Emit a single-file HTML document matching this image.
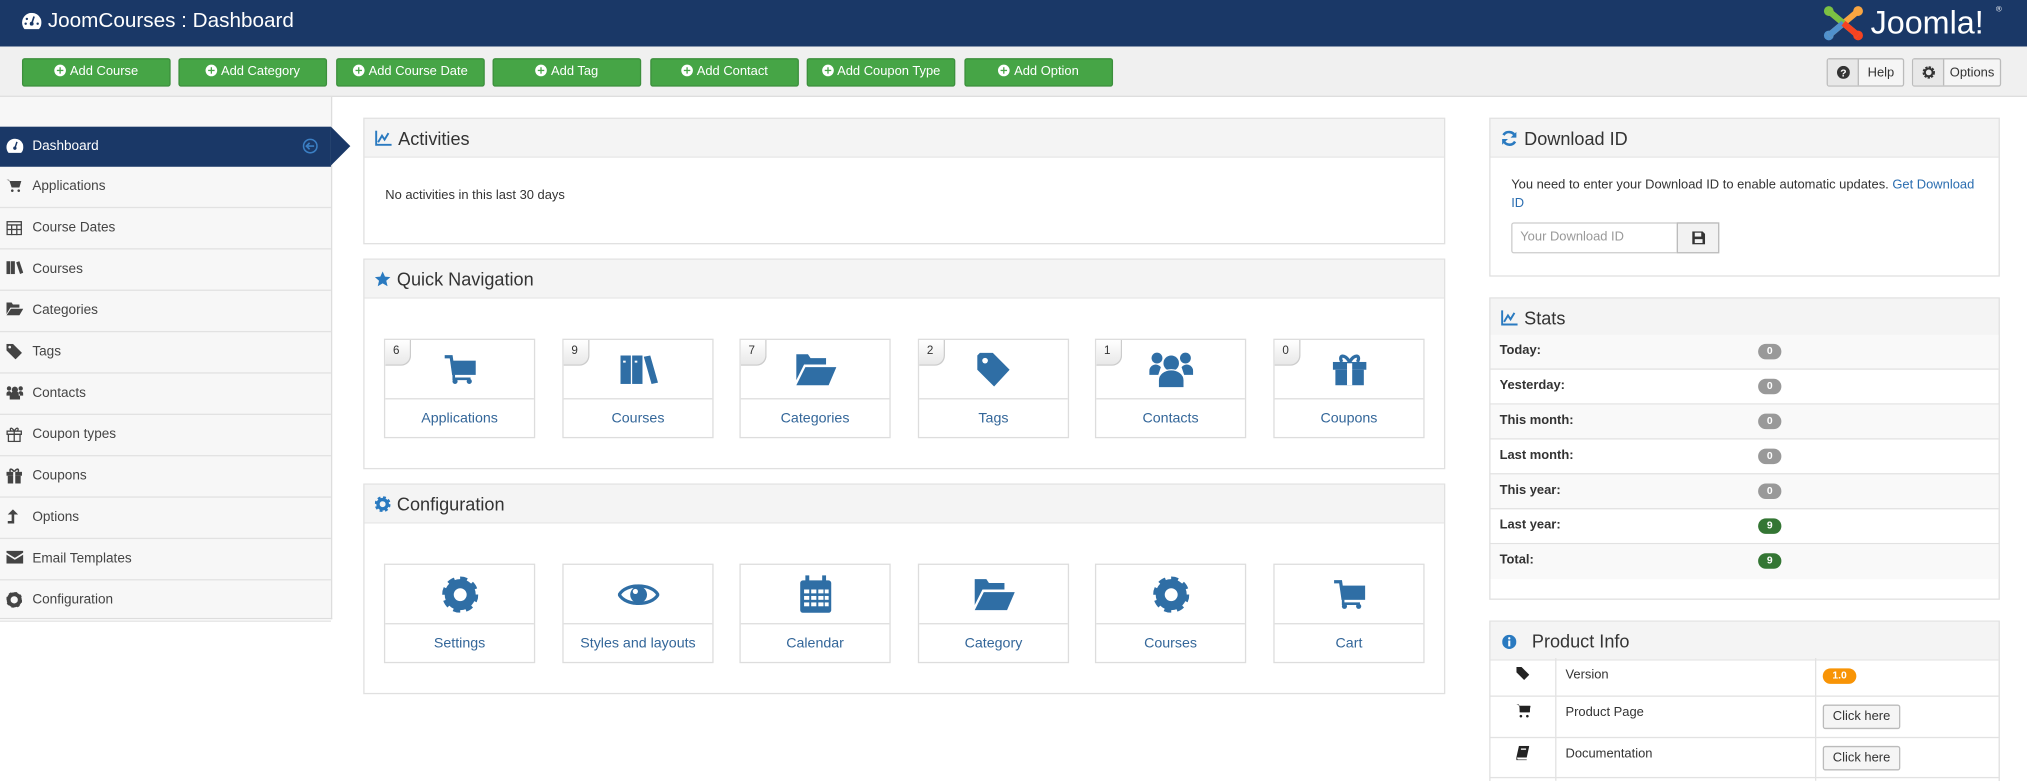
<!DOCTYPE html>
<html><head><meta charset="utf-8"><style>
*{box-sizing:border-box;margin:0;padding:0}
html,body{width:2027px;height:781px;overflow:hidden;background:#fff;font-family:"Liberation Sans",Arial,sans-serif;color:#333}
#w{width:1568px;height:604px;transform:scale(1.29273);transform-origin:0 0;position:relative}
.a{position:absolute}
.hdr{left:0;top:0;width:1568px;height:36px;background:#1a3867;color:#fff}
.tb{left:0;top:36px;width:1568px;height:39px;background:#f0f0f0;border-bottom:1px solid #ddd}
.gb{top:45px;height:22px;width:115px;background:#46a546;border:1px solid #3c8f3c;border-radius:2px;color:#fff;font-size:10px;text-align:center;line-height:20px}
.gb i{display:inline-block;width:9px;height:9px;border-radius:50%;background:#fff;vertical-align:-1px;margin-right:3px;position:relative}
.gb i:before{content:"";position:absolute;left:2px;top:4px;width:5px;height:1px;background:#46a546}
.gb i:after{content:"";position:absolute;left:4px;top:2px;width:1px;height:5px;background:#46a546}
.wb{top:45px;height:22px;border:1px solid #bbb;border-radius:2px;background:#f5f5f5;font-size:10px;display:flex}
.wb span{display:flex;align-items:center;justify-content:center}
.side{left:0;top:75px;width:257px;height:404px;background:#f7f7f7;border-right:1px solid #ddd;border-bottom:1px solid #ddd}
.si{left:0;width:256px;height:32px;border-bottom:1px solid #e2e2e2;font-size:10.5px;color:#444;line-height:31px;padding-left:25px}
.si svg{position:absolute;left:5px;top:9px}
.pn{border:1px solid #e0e0e0;background:#fff}
.ph{height:30px;background:#f4f4f4;border-bottom:1px solid #e8e8e8;font-size:14px;color:#333;line-height:30px;padding-left:8px}
.ph svg{vertical-align:-1px;margin-right:5px}
.tile{width:117px;height:77px;border:1px solid #ddd;background:#fff}
.tile .ic{height:46px;border-bottom:1px solid #ddd;display:flex;align-items:center;justify-content:center}
.tile .lb{height:30px;text-align:center;line-height:30px;font-size:11px;color:#336699}
.cnt{position:absolute;left:0;top:0;width:20px;height:20px;background:linear-gradient(#fff,#e8e8e8);border-right:1px solid #ccc;border-bottom:1px solid #ccc;border-bottom-right-radius:8px;font-size:9px;padding:3px 0 0 6px;color:#333}
.sr{left:1153px;width:393px;height:27px;border-bottom:1px solid #e2e2e2;font-size:10px;font-weight:bold;padding-left:7px;line-height:26px}
.bd{position:absolute;left:207px;top:7px;width:18px;height:12px;border-radius:6px;background:#999;color:#fff;font-size:8px;line-height:12px;text-align:center}
.pr{left:1153px;width:393px;border-bottom:1px solid #e2e2e2;font-size:10px}
.ck{position:absolute;left:257px;width:60px;height:19px;border:1px solid #bbb;border-radius:2px;background:#f5f5f5;font-size:10px;text-align:center;line-height:17px}
</style></head><body><div id="w">
<div class="a hdr">
 <svg class="a" style="left:17px;top:10px" width="15" height="13" viewBox="0 0 16 14"><path d="M8 0A8 8 0 0 0 0 8c0 2 .7 4 2 5.5h12A8 8 0 0 0 8 0z" fill="#fff"/><circle cx="8" cy="9" r="1.6" fill="#1a3867"/><path d="M8 9L10 3" stroke="#1a3867" stroke-width="1.4"/><circle cx="4" cy="5" r="1" fill="#1a3867"/><circle cx="3" cy="9" r="1" fill="#1a3867"/><circle cx="13" cy="9" r="1" fill="#1a3867"/></svg>
 <div class="a" style="left:37px;top:8px;font-size:16px">JoomCourses : Dashboard</div>
 <svg class="a" style="left:1409px;top:3px" width="34" height="30" viewBox="0 0 36 30"><circle cx="6" cy="5" r="4" fill="#7ac143"/><circle cx="30" cy="5" r="4" fill="#f9a541"/><circle cx="6" cy="25" r="4" fill="#5091cd"/><circle cx="30" cy="25" r="4" fill="#f44321"/><path d="M6 5L30 25M30 5L6 25" stroke="#f9a541" stroke-width="5"/><path d="M6 5L18 15" stroke="#7ac143" stroke-width="5"/><path d="M6 25L18 15" stroke="#5091cd" stroke-width="5"/><path d="M30 25L18 15" stroke="#f44321" stroke-width="5"/></svg>
 <div class="a" style="left:1447px;top:4px;font-size:25px;color:#fff">Joomla!</div>
 <div class="a" style="left:1544px;top:5px;font-size:6px">®</div>
</div>
<div class="a tb"></div>
<div class="a gb" style="left:17px"><i></i>Add Course</div>
<div class="a gb" style="left:138px"><i></i>Add Category</div>
<div class="a gb" style="left:260px"><i></i>Add Course Date</div>
<div class="a gb" style="left:381px"><i></i>Add Tag</div>
<div class="a gb" style="left:503px"><i></i>Add Contact</div>
<div class="a gb" style="left:624px"><i></i>Add Coupon Type</div>
<div class="a gb" style="left:746px"><i></i>Add Option</div>
<div class="a wb" style="left:1413px;width:60px"><span style="width:24px;border-right:1px solid #bbb;background:#e8e8e8"><svg width="10" height="10" viewBox="0 0 10 10"><circle cx="5" cy="5" r="5" fill="#333"/><text x="5" y="8.3" font-size="8" fill="#fff" text-anchor="middle" font-weight="bold" font-family="Liberation Sans">?</text></svg></span><span style="flex:1">Help</span></div>
<div class="a wb" style="left:1479px;width:69px"><span style="width:24px;border-right:1px solid #bbb;background:#e8e8e8"><svg width="10" height="10" viewBox="0 0 10 10"><circle cx="5" cy="5" r="3.6" fill="none" stroke="#333" stroke-width="2.4" stroke-dasharray="1.6 0.8"/><circle cx="5" cy="5" r="3" fill="none" stroke="#333" stroke-width="1.5"/></svg></span><span style="flex:1">Options</span></div>

<div class="a side"></div>
<div class="a" style="left:0;top:98px;width:256px;height:31px;background:#1a3867"></div>
<div class="a" style="left:256px;top:98px;width:0;height:0;border-top:15.5px solid transparent;border-bottom:15.5px solid transparent;border-left:15px solid #1a3867"></div>
<div class="a" style="left:25px;top:98px;line-height:31px;font-size:10.5px;color:#fff">Dashboard</div>
<svg class="a" style="left:5px;top:107px" width="13" height="12" viewBox="0 0 16 14"><path d="M8 0A8 8 0 0 0 0 8c0 2 .7 4 2 5.5h12A8 8 0 0 0 8 0z" fill="#fff"/><circle cx="8" cy="9" r="1.6" fill="#1a3867"/><path d="M8 9L10 3" stroke="#1a3867" stroke-width="1.4"/></svg>
<svg class="a" style="left:234px;top:107px" width="12" height="12" viewBox="0 0 12 12"><circle cx="6" cy="6" r="5.2" fill="none" stroke="#3b7fc4" stroke-width="1.2"/><path d="M9 6H3.5M5.5 3.5L3 6l2.5 2.5" stroke="#3b7fc4" stroke-width="1.3" fill="none"/></svg>
<div class="a si" style="top:129px">Applications<svg width="12" height="11" viewBox="0 0 12 11"><path d="M0 1h2l2 6h6l1.5-5H3" fill="#444"/><circle cx="4.5" cy="9.5" r="1" fill="#444"/><circle cx="9.5" cy="9.5" r="1" fill="#444"/></svg></div>
<div class="a si" style="top:161px">Course Dates<svg width="12" height="12" viewBox="0 0 12 12"><rect x="0.5" y="1.5" width="11" height="10" fill="none" stroke="#444"/><path d="M0 4h12M4 4v8M8 4v8M0 7.5h12" stroke="#444"/></svg></div>
<div class="a si" style="top:193px">Courses<svg width="13" height="11" viewBox="0 0 13 11"><rect x="0" y="0" width="3" height="10" fill="#444"/><rect x="3.5" y="0" width="3" height="10" fill="#444"/><path d="M7.5 1l2.5-1 3 9-2.5 1z" fill="#444"/></svg></div>
<div class="a si" style="top:225px">Categories<svg width="13" height="10" viewBox="0 0 13 10"><path d="M0 0h4l1 1.5h5V4H3L0 9z" fill="#444"/><path d="M3.5 4.8H13L10 10H0z" fill="#444"/></svg></div>
<div class="a si" style="top:257px">Tags<svg width="12" height="12" viewBox="0 0 12 12"><path d="M0 0h5l7 7-5 5-7-7z" fill="#444"/><circle cx="2.5" cy="2.5" r="1" fill="#f7f7f7"/></svg></div>
<div class="a si" style="top:289px">Contacts<svg width="13" height="11" viewBox="0 0 13 11"><circle cx="6.5" cy="3.5" r="2.4" fill="#444"/><circle cx="2" cy="2.5" r="1.7" fill="#444"/><circle cx="11" cy="2.5" r="1.7" fill="#444"/><path d="M2.5 11V8.5a4 4 0 0 1 8 0V11zM0 8V6.5a2 2 0 0 1 3.5-1.2V8zM13 8V6.5a2 2 0 0 0-3.5-1.2V8z" fill="#444"/></svg></div>
<div class="a si" style="top:321px">Coupon types<svg width="12" height="12" viewBox="0 0 12 12"><rect x="0.5" y="3.5" width="11" height="2.5" fill="none" stroke="#444"/><rect x="1.5" y="6" width="9" height="5.5" fill="none" stroke="#444"/><path d="M6 3.5v8M6 3.5C4 0 2 1 3.5 3.5M6 3.5C8 0 10 1 8.5 3.5" fill="none" stroke="#444"/></svg></div>
<div class="a si" style="top:353px">Coupons<svg width="12" height="12" viewBox="0 0 12 12"><rect x="0" y="3" width="12" height="3" fill="#444"/><rect x="1" y="6" width="10" height="6" fill="#444"/><path d="M6 3C4 0 2 0.5 3 3M6 3c2-3 4-2.5 3 0" fill="none" stroke="#444" stroke-width="1.2"/><rect x="5.2" y="3" width="1.6" height="9" fill="#f7f7f7"/></svg></div>
<div class="a si" style="top:385px">Options<svg width="10" height="12" viewBox="0 0 10 12"><path d="M5 0L1 4h3v5H1v2h5V4h3z" fill="#444"/></svg></div>
<div class="a si" style="top:417px">Email Templates<svg width="13" height="10" viewBox="0 0 13 10"><path d="M0 0h13v1.5L6.5 5.5 0 1.5z M0 3l6.5 4L13 3v7H0z" fill="#444"/></svg></div>
<div class="a si" style="top:449px">Configuration<svg width="12" height="12" viewBox="0 0 12 12"><circle cx="6" cy="6" r="4.3" fill="none" stroke="#444" stroke-width="3"/><circle cx="6" cy="6" r="5.3" fill="none" stroke="#444" stroke-width="2" stroke-dasharray="2 2.15"/></svg></div>

<div class="a pn" style="left:281px;top:91px;width:837px;height:98px">
 <div class="ph"><svg width="13" height="12" viewBox="0 0 13 12"><path d="M1 0v11h12" stroke="#2a7ac0" stroke-width="1.5" fill="none"/><path d="M2.5 9l3-5 2 3 3-5" stroke="#2a7ac0" stroke-width="1.5" fill="none"/></svg>Activities</div>
 <div style="font-size:10px;padding:24px 0 0 16px">No activities in this last 30 days</div>
</div>

<div class="a pn" style="left:281px;top:200px;width:837px;height:163px">
 <div class="ph"><svg width="12" height="12" viewBox="0 0 12 12"><path d="M6 0l1.8 4 4.2.4-3.2 2.8 1 4.2L6 9.2 2.2 11.4l1-4.2L0 4.4 4.2 4z" fill="#2a7ac0"/></svg>Quick Navigation</div>
</div>
<div class="a tile" style="left:297px;top:262px"><div class="cnt">6</div><div class="ic"><svg width="26" height="26" viewBox="0 0 26 26"><rect x="7" y="6" width="18" height="11" fill="#2f6ea5"/><circle cx="9" cy="22" r="2" fill="#2f6ea5"/><circle cx="20" cy="22" r="2" fill="#2f6ea5"/><path d="M8 17v3h13" stroke="#2f6ea5" stroke-width="2" fill="none"/><path d="M1 3h5l2 14" stroke="#2f6ea5" stroke-width="2.5" fill="none"/></svg></div><div class="lb">Applications</div></div>
<div class="a tile" style="left:435px;top:262px"><div class="cnt">9</div><div class="ic"><svg width="30" height="26" viewBox="0 0 30 26"><rect x="1" y="2" width="8" height="22" fill="#2f6ea5"/><rect x="10" y="2" width="8" height="22" fill="#2f6ea5"/><path d="M19 3l5-1 6 21-5 1z" fill="#2f6ea5"/><rect x="3" y="6" width="2" height="1.5" fill="#fff"/><rect x="12" y="6" width="2" height="1.5" fill="#fff"/></svg></div><div class="lb">Courses</div></div>
<div class="a tile" style="left:572px;top:262px"><div class="cnt">7</div><div class="ic"><svg width="32" height="26" viewBox="0 0 32 26"><path d="M1 1h9l2 3h12v5H7L1 21z" fill="#2f6ea5"/><path d="M8 11h24l-6 14H1z" fill="#2f6ea5"/></svg></div><div class="lb">Categories</div></div>
<div class="a tile" style="left:710px;top:262px"><div class="cnt">2</div><div class="ic"><svg width="28" height="28" viewBox="0 0 28 28"><path d="M3 1h10l13 13-12 13L1 14V3z" fill="#2f6ea5"/><circle cx="7" cy="7" r="2.2" fill="#fff"/></svg></div><div class="lb">Tags</div></div>
<div class="a tile" style="left:847px;top:262px"><div class="cnt">1</div><div class="ic"><svg width="34" height="30" viewBox="0 0 34 30"><circle cx="17" cy="10" r="6" fill="#2f6ea5"/><circle cx="6" cy="6" r="4.2" fill="#2f6ea5"/><circle cx="28" cy="6" r="4.2" fill="#2f6ea5"/><path d="M7 29v-6a10 8 0 0 1 20 0v6z" fill="#2f6ea5" stroke="#fff" stroke-width="1"/><path d="M0 19v-3a5 5 0 0 1 9-3l-2 6zM34 19v-3a5 5 0 0 0-9-3l2 6z" fill="#2f6ea5"/></svg></div><div class="lb">Contacts</div></div>
<div class="a tile" style="left:985px;top:262px"><div class="cnt">0</div><div class="ic"><svg width="26" height="26" viewBox="0 0 26 26"><rect x="0" y="7" width="26" height="6" fill="#2f6ea5"/><rect x="2" y="13" width="22" height="12" fill="#2f6ea5"/><path d="M13 7C9 0 4 2 7 7M13 7c4-7 9-5 6 0" fill="none" stroke="#2f6ea5" stroke-width="2.5"/><rect x="11" y="8" width="4" height="17" fill="#fff"/></svg></div><div class="lb">Coupons</div></div>

<div class="a pn" style="left:281px;top:374px;width:837px;height:163px">
 <div class="ph"><svg width="12" height="12" viewBox="0 0 12 12"><circle cx="6" cy="6" r="3.6" fill="none" stroke="#2a7ac0" stroke-width="2.6"/><circle cx="6" cy="6" r="5.2" fill="none" stroke="#2a7ac0" stroke-width="2" stroke-dasharray="2.2 1.9"/></svg>Configuration</div>
</div>
<div class="a tile" style="left:297px;top:436px"><div class="ic"><svg width="28" height="28" viewBox="0 0 28 28"><circle cx="14" cy="14" r="8.5" fill="none" stroke="#2f6ea5" stroke-width="7"/><circle cx="14" cy="14" r="12" fill="none" stroke="#2f6ea5" stroke-width="4" stroke-dasharray="5.2 4.2"/></svg></div><div class="lb">Settings</div></div>
<div class="a tile" style="left:435px;top:436px"><div class="ic"><svg width="32" height="22" viewBox="0 0 32 22"><path d="M1 11C6 2 26 2 31 11 26 20 6 20 1 11z" fill="none" stroke="#2f6ea5" stroke-width="2.5"/><circle cx="16" cy="11" r="6.5" fill="#2f6ea5"/><circle cx="13.5" cy="8.5" r="2" fill="#fff"/></svg></div><div class="lb">Styles and layouts</div></div>
<div class="a tile" style="left:572px;top:436px"><div class="ic"><svg width="26" height="30" viewBox="0 0 26 30"><rect x="1" y="4" width="24" height="25" rx="2" fill="#2f6ea5"/><rect x="5" y="0" width="3" height="6" fill="#2f6ea5"/><rect x="18" y="0" width="3" height="6" fill="#2f6ea5"/><g fill="#fff"><rect x="4" y="11" width="4" height="3"/><rect x="9.5" y="11" width="4" height="3"/><rect x="15" y="11" width="4" height="3"/><rect x="4" y="16" width="4" height="3"/><rect x="9.5" y="16" width="4" height="3"/><rect x="15" y="16" width="4" height="3"/><rect x="4" y="21" width="4" height="3"/><rect x="9.5" y="21" width="4" height="3"/><rect x="15" y="21" width="4" height="3"/><rect x="20" y="11" width="3" height="3"/><rect x="20" y="16" width="3" height="3"/><rect x="20" y="21" width="3" height="3"/></g></svg></div><div class="lb">Calendar</div></div>
<div class="a tile" style="left:710px;top:436px"><div class="ic"><svg width="32" height="26" viewBox="0 0 32 26"><path d="M1 1h9l2 3h12v5H7L1 21z" fill="#2f6ea5"/><path d="M8 11h24l-6 14H1z" fill="#2f6ea5"/></svg></div><div class="lb">Category</div></div>
<div class="a tile" style="left:847px;top:436px"><div class="ic"><svg width="28" height="28" viewBox="0 0 28 28"><circle cx="14" cy="14" r="8.5" fill="none" stroke="#2f6ea5" stroke-width="7"/><circle cx="14" cy="14" r="12" fill="none" stroke="#2f6ea5" stroke-width="4" stroke-dasharray="5.2 4.2"/></svg></div><div class="lb">Courses</div></div>
<div class="a tile" style="left:985px;top:436px"><div class="ic"><svg width="26" height="26" viewBox="0 0 26 26"><rect x="7" y="6" width="18" height="11" fill="#2f6ea5"/><circle cx="9" cy="22" r="2" fill="#2f6ea5"/><circle cx="20" cy="22" r="2" fill="#2f6ea5"/><path d="M8 17v3h13" stroke="#2f6ea5" stroke-width="2" fill="none"/><path d="M1 3h5l2 14" stroke="#2f6ea5" stroke-width="2.5" fill="none"/></svg></div><div class="lb">Cart</div></div>

<div class="a pn" style="left:1152px;top:91px;width:395px;height:123px">
 <div class="ph"><svg width="13" height="12" viewBox="0 0 13 12"><path d="M11 4.5A5 5 0 0 0 2 3.5M2 7.5A5 5 0 0 0 11 8.5" stroke="#2a7ac0" stroke-width="2" fill="none"/><path d="M12 1v4.5H7.5zM1 11V6.5h4.5z" fill="#2a7ac0"/></svg>Download ID</div>
 <div style="font-size:10px;line-height:14px;padding:15px 16px 0 16px">You need to enter your Download ID to enable automatic updates. <span style="color:#2a6db0">Get Download ID</span></div>
 <div style="position:absolute;left:16px;top:80px;width:161px;height:24px;border:1px solid #ccc;border-radius:2px;font-size:10px;color:#999;line-height:22px;padding-left:6px">Your Download ID</div>
 <div style="position:absolute;left:144px;top:80px;width:33px;height:24px;border:1px solid #bbb;background:#f2f2f2;display:flex;align-items:center;justify-content:center"><svg width="10" height="10" viewBox="0 0 10 10"><path d="M0 0h8l2 2v8H0z" fill="#333"/><rect x="2" y="1" width="5" height="3" fill="#f2f2f2"/><rect x="2" y="6" width="6" height="3" fill="#f2f2f2"/></svg></div>
</div>

<div class="a pn" style="left:1152px;top:230px;width:395px;height:234px">
 <div class="ph"><svg width="13" height="12" viewBox="0 0 13 12"><path d="M1 0v11h12" stroke="#2a7ac0" stroke-width="1.5" fill="none"/><path d="M2.5 9l3-5 2 3 3-5" stroke="#2a7ac0" stroke-width="1.5" fill="none"/></svg>Stats</div>
</div>
<div class="a sr" style="top:259px;background:#f9f9f9">Today:<span class="bd">0</span></div>
<div class="a sr" style="top:286px">Yesterday:<span class="bd">0</span></div>
<div class="a sr" style="top:313px;background:#f9f9f9">This month:<span class="bd">0</span></div>
<div class="a sr" style="top:340px">Last month:<span class="bd">0</span></div>
<div class="a sr" style="top:367px;background:#f9f9f9">This year:<span class="bd">0</span></div>
<div class="a sr" style="top:394px">Last year:<span class="bd" style="background:#347634">9</span></div>
<div class="a sr" style="top:421px;background:#f9f9f9;border-bottom:none">Total:<span class="bd" style="background:#347634">9</span></div>

<div class="a pn" style="left:1152px;top:480px;width:395px;height:140px">
 <div class="ph" style="padding-left:9px"><svg width="11" height="11" viewBox="0 0 11 11" style="margin-right:12px"><circle cx="5.5" cy="5.5" r="5.5" fill="#2a7ac0"/><rect x="4.7" y="4.5" width="1.6" height="4.5" fill="#fff"/><circle cx="5.5" cy="2.8" r="0.9" fill="#fff"/></svg>Product Info</div>
</div>
<div class="a" style="left:1203px;top:509px;width:1px;height:95px;background:#e2e2e2"></div>
<div class="a" style="left:1404px;top:509px;width:1px;height:95px;background:#e2e2e2"></div>
<div class="a pr" style="top:509px;height:30px"><svg class="a" style="left:20px;top:7px" width="10" height="10" viewBox="0 0 10 10"><path d="M0 0h4l6 6-4 4L0 4z" fill="#222"/></svg><span class="a" style="left:58px;top:8px">Version</span><span class="a" style="left:257px;top:8px;width:26px;height:12px;border-radius:6px;background:#f89406;color:#fff;font-size:8px;font-weight:bold;text-align:center;line-height:12px">1.0</span></div>
<div class="a pr" style="top:539px;height:32px"><svg class="a" style="left:20px;top:6px" width="11" height="10" viewBox="0 0 11 10"><path d="M0 0h2l1 6h7l1-5H3" fill="#222"/><rect x="2.5" y="1" width="8" height="5" fill="#222"/><circle cx="3.5" cy="9" r="1" fill="#222"/><circle cx="8.5" cy="9" r="1" fill="#222"/></svg><span class="a" style="left:58px;top:7px">Product Page</span><span class="ck" style="top:6px">Click here</span></div>
<div class="a pr" style="top:571px;height:31px"><svg class="a" style="left:20px;top:6px" width="10" height="11" viewBox="0 0 10 11"><path d="M2 0h8l-2 9H0z" fill="#222"/><path d="M0 9l.5 2H8" stroke="#222" fill="none"/><rect x="3.5" y="2" width="4" height="1" fill="#fff"/></svg><span class="a" style="left:58px;top:7px">Documentation</span><span class="ck" style="top:6px">Click here</span></div>
</div></body></html>
